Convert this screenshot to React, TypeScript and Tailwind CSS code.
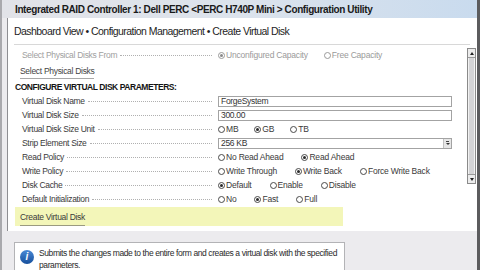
import React from "react";

const font = { fontFamily: '"Liberation Sans", Arial, sans-serif' };

type Opt = { label: string; checked?: boolean };

const Radio = ({ checked, disabled }: { checked?: boolean; disabled?: boolean }) => (
  <span
    className={`flex h-[7px] w-[7px] shrink-0 items-center justify-center rounded-full border bg-white ${
      disabled ? "border-[#9a9a9a]" : "border-[#4a4a4a]"
    }`}
  >
    {checked && (
      <span className={`h-[3px] w-[3px] rounded-full ${disabled ? "bg-[#8a8a8a]" : "bg-[#2b2b2b]"}`} />
    )}
  </span>
);

const Options = ({ opts, disabled, gap = "gap-[18px]" }: { opts: Opt[]; disabled?: boolean; gap?: string }) => (
  <div className={`flex items-center ${gap}`}>
    {opts.map((o) => (
      <div key={o.label} className="flex items-center gap-[1px] whitespace-nowrap tracking-[-0.2px]">
        <Radio checked={o.checked} disabled={disabled} />
        <span className={disabled ? "text-[#9a9a9a]" : "text-[#3a3a3a]"}>{o.label}</span>
      </div>
    ))}
  </div>
);

const Row = ({ label, children, muted }: { label: string; children: React.ReactNode; muted?: boolean }) => (
  <div className="flex h-[14px] items-center">
    <div className="flex w-[204px] shrink-0 items-center pl-[14px]">
      <span className={`whitespace-nowrap ${muted ? "text-[#a0a0a0]" : "text-[#3a3a3a]"}`}>{label}</span>
      <span className="ml-[3px] mt-[1px] h-0 flex-1 border-t border-dotted border-[#b0b0b0]" />
    </div>
    <div className="ml-[6px] flex items-center">{children}</div>
  </div>
);

const TextBox = ({ value, select }: { value: string; select?: boolean }) => (
  <div className="flex h-[11px] w-[234px] items-center border border-[#a3a3a3] bg-white pl-[2px] text-[#333]">
    <span className="flex-1 leading-none">{value}</span>
    {select && (
      <span className="flex h-full w-[8px] flex-col items-center justify-center border-l border-[#c0c0c0] bg-[#e6e6e6]">
        <span className="h-[1px] w-[3px] bg-[#444]" />
        <span className="mt-[1px] h-0 w-0 border-x-[2px] border-t-[2px] border-x-transparent border-t-[#333]" />
      </span>
    )}
  </div>
);

export default function App() {
  return (
    <div
      style={font}
      className="flex h-[270px] w-[480px] flex-col overflow-hidden border-l-2 border-r-[3px] border-l-[#a9a9ad] border-r-[#5c5c5e] bg-[#ecebee]"
    >
      {/* title bar */}
      <div className="flex h-[18px] shrink-0 items-center bg-gradient-to-r from-[#e2e3e8] via-[#dce3ec] to-[#c9dbee] pl-[13px] text-[10px] font-bold tracking-[-0.4px] text-[#1a1a1a]">
        Integrated RAID Controller 1: Dell PERC &lt;PERC H740P Mini &gt; Configuration Utility
      </div>

      {/* main panel */}
      <div className="ml-[5px] flex shrink-0 flex-col border-l border-[#8e8e92] bg-white pb-[5px] text-[8.5px] tracking-[-0.3px]">
        <div className="flex h-[26px] items-end pb-[4px] pl-[6px] text-[10.5px] tracking-[-0.55px] text-[#1e1e1e]">
          Dashboard View • Configuration Management • Create Virtual Disk
        </div>
        <div className="ml-[6px] h-px w-[456px] bg-[#d8d8d8]" />

        <div className="flex">
          <div className="flex flex-1 flex-col">
            <div className="mt-[3px]">
              <Row label="Select Physical Disks From" muted>
                <Options
                  disabled
                  gap="gap-[16px]"
                  opts={[{ label: "Unconfigured Capacity", checked: true }, { label: "Free Capacity" }]}
                />
              </Row>
            </div>

            <div className="ml-[12px] mt-[3px] flex h-[14px] items-center self-start whitespace-nowrap border-b border-[#a8a8a8] text-[#444]">
              Select Physical Disks
            </div>

            <div className="mt-[2px] flex h-[13px] items-center pl-[7px] font-bold tracking-[-0.45px] text-[#141414]">
              CONFIGURE VIRTUAL DISK PARAMETERS:
            </div>

            <Row label="Virtual Disk Name">
              <TextBox value="ForgeSystem" />
            </Row>
            <Row label="Virtual Disk Size">
              <TextBox value="300.00" />
            </Row>
            <Row label="Virtual Disk Size Unit">
              <Options gap="gap-[16px]" opts={[{ label: "MB" }, { label: "GB", checked: true }, { label: "TB" }]} />
            </Row>
            <Row label="Strip Element Size">
              <TextBox value="256 KB" select />
            </Row>
            <Row label="Read Policy">
              <Options opts={[{ label: "No Read Ahead" }, { label: "Read Ahead", checked: true }]} />
            </Row>
            <Row label="Write Policy">
              <Options
                opts={[{ label: "Write Through" }, { label: "Write Back", checked: true }, { label: "Force Write Back" }]}
              />
            </Row>
            <Row label="Disk Cache">
              <Options opts={[{ label: "Default", checked: true }, { label: "Enable" }, { label: "Disable" }]} />
            </Row>
            <Row label="Default Initialization">
              <Options opts={[{ label: "No" }, { label: "Fast", checked: true }, { label: "Full" }]} />
            </Row>

            <div className="ml-[7px] mt-[1px] flex h-[19px] w-[328px] items-start bg-[#f3f6b9] pl-[5px] pt-[4px]">
              <span className="border-b border-[#9a9a80] pb-[1px] text-[#3a3a3a]">Create Virtual Disk</span>
            </div>
          </div>

          {/* scrollbar */}
          <div className="mr-[1px] mt-[3px] flex h-[136px] w-[9px] flex-col border border-[#8a8a8a] bg-[#d4d4d6]">
            <div className="flex h-[9px] items-center justify-center border-b border-[#9a9a9a] bg-[#ececec]">
              <span className="h-0 w-0 border-x-[2px] border-b-[3px] border-x-transparent border-b-[#222]" />
            </div>
            <div className="flex-1 border-x border-[#f2f2f2]" />
            <div className="flex h-[9px] items-center justify-center border-t border-[#9a9a9a] bg-[#ececec]">
              <span className="h-0 w-0 border-x-[2px] border-t-[3px] border-x-transparent border-t-[#222]" />
            </div>
          </div>
        </div>
      </div>

      {/* help box */}
      <div className="ml-[12px] mt-[11px] flex w-[331px] flex-1 border border-b-0 border-[#b3b3b6] bg-white">
        <div className="pl-[5px] pt-[7px]">
          <div className="flex h-[14px] w-[14px] items-center justify-center rounded-full bg-gradient-to-b from-[#4b8ad6] to-[#154f9c] text-[10px] font-bold italic leading-none text-white">
            i
          </div>
        </div>
        <div className="ml-[5px] pt-[4px] text-[8.5px] leading-[12px] tracking-[-0.4px] text-[#2a2a2a]">
          Submits the changes made to the entire form and creates a virtual disk with the specified parameters.
        </div>
      </div>
    </div>
  );
}
